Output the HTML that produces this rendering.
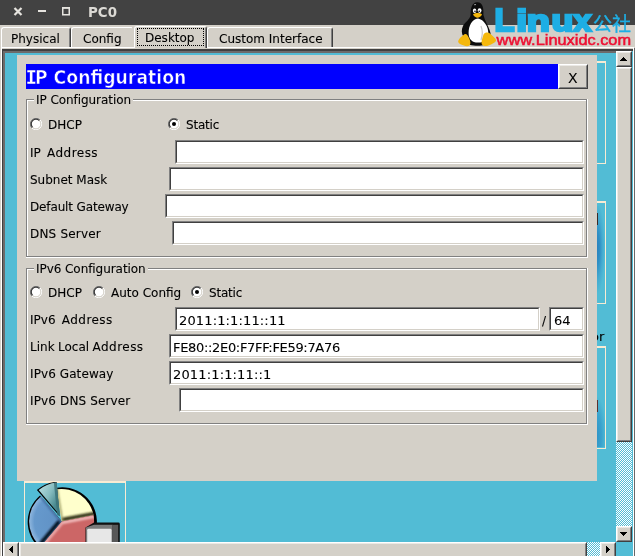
<!DOCTYPE html>
<html>
<head>
<meta charset="utf-8">
<title>PC0</title>
<style>
html,body{margin:0;padding:0;}
body{will-change:transform;}
body{width:635px;height:556px;overflow:hidden;position:relative;background:#d4d0c8;
  font-family:"DejaVu Sans","Liberation Sans",sans-serif;font-size:12px;color:#000;-webkit-text-stroke:0.1px #000;}
.a{position:absolute;box-sizing:border-box;}
.t{position:absolute;white-space:nowrap;line-height:14px;height:14px;}
#titlebar{left:0;top:0;width:635px;height:25px;background:#424242;}
#title{-webkit-text-stroke:0;left:88px;top:5px;font-weight:bold;font-size:13.4px;color:#dcdad5;line-height:16px;height:16px;}
/* tabs */
.tab{position:absolute;box-sizing:border-box;top:27px;height:20px;border-top:1px solid #fff;border-left:1px solid #fff;
  border-right:1px solid #404040;border-top-left-radius:3px;border-top-right-radius:3px;background:#d4d0c8;}
.tab:after{content:"";position:absolute;right:0;top:1px;bottom:0;width:1px;background:#808080;}
.tab span{position:absolute;top:4px;white-space:nowrap;line-height:14px;}
/* sunken input */
.in{position:absolute;box-sizing:border-box;height:24px;background:#fff;border:1px solid;border-color:#808080 #fff #fff #808080;}
.in:before{content:"";position:absolute;left:0;top:0;right:0;bottom:0;border:1px solid;border-color:#404040 #d4d0c8 #d4d0c8 #404040;}
.in span{position:absolute;left:3px;top:5px;font-size:13px;line-height:16px;white-space:nowrap;}
/* group box */
.gb{position:absolute;box-sizing:border-box;border:1px solid #808080;box-shadow:1px 1px 0 #fff, 0 1px 0 #fff, 1px 0 0 #fff, inset 1px 1px 0 #fff;}
.gl{position:absolute;background:#d4d0c8;padding:0 2px 0 2px;letter-spacing:-0.06px;line-height:14px;white-space:nowrap;}
/* radio */
.rb{position:absolute;width:12px;height:12px;}
/* raised button */
.btn{position:absolute;box-sizing:border-box;background:#d4d0c8;border:1px solid;border-color:#fff #404040 #404040 #fff;}
.btn:before{content:"";position:absolute;left:0;top:0;right:0;bottom:0;border:1px solid;border-color:#ebe9e5 #808080 #808080 #ebe9e5;}
.teal{background:#52bcd5;}
.chk{background-color:#52bcd5;background-image:conic-gradient(#fff 25%,transparent 0 50%,#fff 0 75%,transparent 0);background-size:2px 2px;}
.ibox{position:absolute;box-sizing:border-box;border:1px solid #f8ebd3;border-top-width:2px;}
</style>
</head>
<body>
<!-- title bar -->
<div class="a" id="titlebar"></div>
<svg class="a" style="left:0;top:0" width="130" height="24" viewBox="0 0 130 24">
  <g stroke="#e6e4df" fill="none">
    <path d="M14.5 8 L21.5 15 M21.5 8 L14.5 15" stroke-width="2.2"/>
    <path d="M38 11 H46" stroke-width="2"/>
    <path d="M62.75 8 H69.25 V14.75 H62.75 Z" stroke-width="1.5"/>
    <path d="M62 7.75 H70" stroke-width="1.5"/>
  </g>
</svg>
<div class="t" id="title">PC0</div>

<!-- tabs -->
<div class="tab" style="left:1px;width:70px;"><span style="left:9px">Physical</span></div>
<div class="tab" style="left:71px;width:63px;"><span style="left:11px">Config</span></div>
<div class="tab" style="left:207px;width:126px;"><span style="left:11px">Custom Interface</span></div>
<!-- pane top line -->
<div class="a" style="left:1px;top:47px;width:633px;height:1px;background:#fff"></div>
<div class="a" style="left:132px;top:27px;width:2px;height:20px;background:#d4d0c8"></div>
<div class="tab" style="left:134px;width:73px;top:26px;height:22px;"><span style="left:10px;top:4px">Desktop</span>
  <div class="a" style="left:2px;top:1px;width:67px;height:18px;border:1px dotted #000;"></div>
</div>

<!-- pane frame -->
<div class="a" style="left:1px;top:48px;width:1px;height:508px;background:#fff"></div>
<div class="a" style="left:2px;top:49px;width:632px;height:507px;background:#404040"></div>
<div class="a" style="left:3px;top:51px;width:613px;height:505px;background:#6d6b6b"></div>
<div class="a teal" style="left:5px;top:53px;width:611px;height:489px;"></div>
<div class="a teal" style="left:616px;top:51px;width:17px;height:505px;"></div>
<div class="a" style="left:633px;top:48px;width:1px;height:508px;background:#fff"></div>
<div class="a" style="left:634px;top:48px;width:1px;height:508px;background:#686868"></div>

<!-- right icon boxes -->
<div class="ibox" style="left:560px;top:61px;width:46px;height:103px;"></div>
<div class="ibox" style="left:560px;top:201px;width:46px;height:103px;"></div>
<div class="ibox" style="left:560px;top:346px;width:46px;height:103px;"></div>
<div class="a" style="left:597px;top:206px;width:8px;height:96px;background:radial-gradient(ellipse 8px 46px at 0px 42px,#2a82be 0,#2f8fc5 35%,rgba(60,160,205,0.6) 70%,rgba(82,188,213,0) 100%);"></div>
<div class="a" style="left:597px;top:213px;width:1px;height:12px;background:#3a2a28"></div>
<div class="a" style="left:597px;top:396px;width:8px;height:51px;background:radial-gradient(ellipse 9px 40px at 0px 40px,#2f95c8 0,#3aa2cd 50%,rgba(82,188,213,0) 100%);"></div>
<div class="a" style="left:597px;top:400px;width:1px;height:12px;background:#5a3030"></div>
<div class="t" style="left:591px;top:329px;font-size:13px;line-height:16px;height:16px;">or</div>

<!-- bottom icon box -->
<div class="ibox" style="left:24px;top:481px;width:102px;height:102px;"></div>
<svg class="a" style="left:25px;top:482px" width="100" height="60" viewBox="25 482 100 60">
  <defs>
    <radialGradient id="gb" cx="61.6" cy="521.4" r="34" gradientUnits="userSpaceOnUse"><stop offset="0" stop-color="#5f90c4"/><stop offset="0.8" stop-color="#6699cc"/><stop offset="1" stop-color="#9cc0e4"/></radialGradient>
    <linearGradient id="gt" x1="38" y1="489" x2="58" y2="500" gradientUnits="userSpaceOnUse"><stop offset="0" stop-color="#b4dcde"/><stop offset="0.55" stop-color="#86bcc0"/><stop offset="1" stop-color="#4a8a90"/></linearGradient>
    <clipPath id="cy"><path d="M61.60 521.40 L56.24 489.35 A32.5 32.5 0 0 1 93.53 515.37 Z"/></clipPath>
    <clipPath id="cr"><path d="M61.60 521.40 L93.53 515.37 A32.5 32.5 0 0 1 40.71 546.30 Z"/></clipPath>
    <clipPath id="cb"><path d="M61.60 521.40 L40.71 546.30 A32.5 32.5 0 0 1 41.15 496.14 Z"/></clipPath>
    <filter id="bl" x="-20%" y="-20%" width="140%" height="140%"><feGaussianBlur stdDeviation="1.1"/></filter>
  </defs>
  <path d="M62.30 521.90 L57.19 487.68 A34.6 34.6 0 1 1 40.06 495.39 Z" fill="#000"/>
  <path d="M61.60 521.40 L56.24 489.35 A32.5 32.5 0 0 1 93.53 515.37 Z" fill="#ffffcc"/>
  <g clip-path="url(#cy)" filter="url(#bl)"><path d="M61.60 521.40 L95.50 514.99 L94.87 511.65 L60.97 518.06 Z" fill="#2a2a10"/><path d="M61.60 521.40 L55.91 487.37 L57.48 487.11 L63.18 521.14 Z" fill="#8a8a50"/></g>
  <path d="M61.60 521.40 L93.53 515.37 A32.5 32.5 0 0 1 40.71 546.30 Z" fill="#cc6666"/>
  <g clip-path="url(#cr)" filter="url(#bl)"><path d="M61.60 521.40 L95.50 514.99 L95.98 517.55 L62.08 523.95 Z" fill="#f6c8c8"/><path d="M61.60 521.40 L39.42 547.83 L41.42 549.50 L63.59 523.07 Z" fill="#f0b4b4"/></g>
  <path d="M61.60 521.40 L40.71 546.30 A32.5 32.5 0 0 1 41.15 496.14 Z" fill="url(#gb)"/>
  <g clip-path="url(#cb)" filter="url(#bl)"><path d="M61.60 521.40 L39.42 547.83 L36.67 545.51 L58.84 519.09 Z" fill="#060c1c"/><path d="M61.60 521.40 L39.89 494.59 L38.65 495.60 L60.36 522.41 Z" fill="#3c6494"/></g>
  <path d="M59.60 516.20 L36.90 490.09 A34.6 34.6 0 0 1 56.58 481.73 Z" fill="#000"/>
  <path d="M59.90 515.30 L38.69 490.02 A33 33 0 0 1 56.45 482.48 Z" fill="url(#gt)"/>
  <path d="M59.90 515.30 L56.45 482.48 L53.86 482.75 L57.31 515.57 Z" fill="#3c7278" opacity="0.85"/>
  <path d="M85.5 553 V527.5 L94 522.6 H118.4 Q119.8 522.6 119.8 524 V553 Z" fill="#111"/>
  <path d="M86 553 V527.6 L94 524.8 H112.5 V553 Z" fill="#7a7a7a"/>
  <path d="M112.2 524.8 H118.2 V553 H112.2 Z" fill="#585858"/>
  <path d="M87.2 553 V530.2 Q87.2 528.8 88.6 528.8 H110.2 Q111.6 528.8 111.6 530.2 V553 Z" fill="#e7e7e7"/>
</svg>

<!-- dialog -->
<div class="a" style="left:17px;top:55px;width:580px;height:426px;background:#d4d0c8"></div>
<div class="a" style="left:26px;top:64px;width:532px;height:25px;background:#0000ff"></div>
<div class="t" id="dlgtitle" style="left:26px;top:65px;height:24px;line-height:24px;font-family:'DejaVu Sans Condensed','DejaVu Sans',sans-serif;font-stretch:condensed;font-size:19.2px;font-weight:bold;color:#fff;-webkit-text-stroke:0.6px #0000ff;"><span style="font-family:'DejaVu Sans Mono',monospace;font-stretch:normal;font-size:19px;letter-spacing:-2px;margin-left:-0.5px;-webkit-text-stroke:0.3px #0000ff;">I</span>P Configuration</div>
<div class="btn" style="left:558px;top:64px;width:30px;height:25px;"></div>
<div class="t" style="left:568px;top:70px;font-size:14px;line-height:16px;height:16px;">X</div>

<!-- group 1 -->
<div class="gb" style="left:26px;top:99px;width:561px;height:158px;"></div>
<div class="gl" style="left:34px;top:93px;">IP Configuration</div>
<svg class="rb" style="left:30px;top:118px" viewBox="0 0 12 12"><use href="#radio"/></svg>
<div class="t" style="left:48px;top:118px;">DHCP</div>
<svg class="rb" style="left:168px;top:118px" viewBox="0 0 12 12"><use href="#radio"/><use href="#dot"/></svg>
<div class="t" style="left:186px;top:118px;letter-spacing:-0.2px;">Static</div>

<div class="t" style="left:30px;top:146px;"><span style="word-spacing:2.4px">IP </span><span style="letter-spacing:0.47px">Address</span></div>
<div class="in" style="left:175px;top:140px;width:409px;"></div>
<div class="t" style="left:30px;top:173px;">Subnet Mask</div>
<div class="in" style="left:169px;top:167px;width:415px;"></div>
<div class="t" style="left:30px;top:200px;letter-spacing:-0.14px;">Default Gateway</div>
<div class="in" style="left:165px;top:194px;width:419px;"></div>
<div class="t" style="left:30px;top:227px;letter-spacing:0.19px;">DNS Server</div>
<div class="in" style="left:172px;top:221px;width:412px;"></div>

<!-- group 2 -->
<div class="gb" style="left:26px;top:268px;width:561px;height:156px;"></div>
<div class="gl" style="left:34px;top:262px;">IPv6 Configuration</div>
<svg class="rb" style="left:30px;top:286px" viewBox="0 0 12 12"><use href="#radio"/></svg>
<div class="t" style="left:48px;top:286px;">DHCP</div>
<svg class="rb" style="left:93px;top:286px" viewBox="0 0 12 12"><use href="#radio"/></svg>
<div class="t" style="left:111px;top:286px;">Auto Config</div>
<svg class="rb" style="left:191px;top:286px" viewBox="0 0 12 12"><use href="#radio"/><use href="#dot"/></svg>
<div class="t" style="left:209px;top:286px;letter-spacing:-0.2px;">Static</div>

<div class="t" style="left:30px;top:313px;"><span style="word-spacing:2.4px">IPv6 </span><span style="letter-spacing:0.47px">Address</span></div>
<div class="in" style="left:175px;top:307px;width:365px;"><span style="letter-spacing:0.14px">2011:1:1:11::11</span></div>
<div class="t" style="left:542px;top:314px;">/</div>
<div class="in" style="left:549px;top:307px;width:35px;"><span style="left:4px">64</span></div>
<div class="t" style="left:30px;top:340px;"><span style="word-spacing:-0.4px">Link Local </span><span style="letter-spacing:0.47px">Address</span></div>
<div class="in" style="left:169px;top:334px;width:415px;"><span style="letter-spacing:-0.32px">FE80::2E0:F7FF:FE59:7A76</span></div>
<div class="t" style="left:30px;top:367px;letter-spacing:0.09px;">IPv6 Gateway</div>
<div class="in" style="left:169px;top:361px;width:415px;"><span style="letter-spacing:0.15px">2011:1:1:11::1</span></div>
<div class="t" style="left:30px;top:394px;letter-spacing:0.14px;">IPv6 DNS Server</div>
<div class="in" style="left:179px;top:388px;width:405px;"></div>

<!-- vertical scrollbar -->
<div class="a chk" style="left:616px;top:51px;width:16px;height:491px;"></div>
<div class="btn" style="left:616px;top:51px;width:16px;height:16px;"></div>
<div class="btn" style="left:616px;top:67px;width:16px;height:375px;"></div>
<div class="btn" style="left:616px;top:526px;width:16px;height:16px;"></div>
<!-- horizontal scrollbar -->
<div class="a chk" style="left:3px;top:542px;width:613px;height:16px;"></div>
<div class="btn" style="left:3px;top:542px;width:16px;height:16px;"></div>
<div class="btn" style="left:19px;top:542px;width:568px;height:16px;"></div>
<div class="btn" style="left:600px;top:542px;width:16px;height:16px;"></div>
<svg class="a" style="left:0;top:0;pointer-events:none" width="635" height="556" viewBox="0 0 635 556">
  <defs>
    <g id="radio">
      <circle cx="6" cy="6" r="5" fill="#fff"/>
      <path d="M1.9 10.1 A5.8 5.8 0 0 1 10.1 1.9" fill="none" stroke="#808080" stroke-width="1"/>
      <path d="M2.6 9.4 A4.8 4.8 0 0 1 9.4 2.6" fill="none" stroke="#383838" stroke-width="1.25"/>
      <path d="M1.9 10.1 A5.8 5.8 0 0 0 10.1 1.9" fill="none" stroke="#fff" stroke-width="1"/>
      <path d="M2.6 9.4 A4.8 4.8 0 0 0 9.4 2.6" fill="none" stroke="#d4d0c8" stroke-width="1"/>
    </g>
    <circle id="dot" cx="6" cy="6" r="2" fill="#000"/>
  </defs>
  <g fill="#000" shape-rendering="crispEdges"><rect x="623" y="57" width="1" height="1"/><rect x="622" y="58" width="3" height="1"/><rect x="621" y="59" width="5" height="1"/><rect x="620" y="60" width="7" height="1"/><rect x="620" y="532" width="7" height="1"/><rect x="621" y="533" width="5" height="1"/><rect x="622" y="534" width="3" height="1"/><rect x="623" y="535" width="1" height="1"/><rect x="9" y="549" width="1" height="1"/><rect x="10" y="548" width="1" height="3"/><rect x="11" y="547" width="1" height="5"/><rect x="12" y="546" width="1" height="7"/><rect x="606" y="546" width="1" height="7"/><rect x="607" y="547" width="1" height="5"/><rect x="608" y="548" width="1" height="3"/><rect x="609" y="549" width="1" height="1"/></g>
</svg>

<!-- logo -->
<svg class="a" style="left:455px;top:0" width="180" height="48" viewBox="455 0 180 48">
<g id="linuxword">
<text x="494.63" y="31.3" font-family="Liberation Sans, sans-serif" font-weight="bold" font-size="31" fill="#1eaee4" stroke="#1eaee4" stroke-width="2.4" stroke-linejoin="miter" textLength="20.02" lengthAdjust="spacingAndGlyphs">L</text>
<text x="516.28" y="31.3" font-family="Liberation Sans, sans-serif" font-weight="bold" font-size="30" fill="#1eaee4" stroke="#1eaee4" stroke-width="2.4" stroke-linejoin="miter" textLength="10.95" lengthAdjust="spacingAndGlyphs">i</text>
<text x="526.66" y="31.3" font-family="Liberation Sans, sans-serif" font-weight="bold" font-size="30" fill="#1eaee4" stroke="#1eaee4" stroke-width="2.4" stroke-linejoin="miter" textLength="23.13" lengthAdjust="spacingAndGlyphs">n</text>
<text x="551.40" y="31.3" font-family="Liberation Sans, sans-serif" font-weight="bold" font-size="30" fill="#1eaee4" stroke="#1eaee4" stroke-width="2.4" stroke-linejoin="miter" textLength="21.78" lengthAdjust="spacingAndGlyphs">u</text>
<text x="573.41" y="31.3" font-family="Liberation Sans, sans-serif" font-weight="bold" font-size="30" fill="#1eaee4" stroke="#1eaee4" stroke-width="2.4" stroke-linejoin="miter" textLength="17.91" lengthAdjust="spacingAndGlyphs">x</text>
</g>
  <text x="593" y="31" font-family="Noto Sans CJK SC, sans-serif" font-size="19" fill="#1eaee4" stroke="#1eaee4" stroke-width="0.35" textLength="38" lengthAdjust="spacingAndGlyphs">公社</text>
  <text x="496.6" y="44.7" font-family="Liberation Sans, sans-serif" font-size="15.4" fill="#ee1133" stroke="#ee1133" stroke-width="0.55" textLength="134.5" lengthAdjust="spacingAndGlyphs">www.Linuxidc.com</text>
  <!-- tux -->
  <g>
    <path d="M463.5 37 C461.3 33.5 461.3 29.5 463 26 C465 22 469.8 20 470.6 15 C470.5 9 471.5 2.2 477.2 2.2 C483.6 2.2 483.6 10 483.4 15 C485 21 488 25 489.6 30 C491 34 491.5 38 490 41 L484 45 C482 46 474 46 470 45 L466 41 Z" fill="#0c0c0c"/>
    <path d="M474 4.6 L476.2 4 L475 5.6 Z" fill="#ddd"/>
    <path d="M478 18.5 C484 19.5 488.5 27 488.3 33 C488 39 484 42.8 478 42.6 C472 42.6 468.6 39 468.6 33 C468.6 26 472 19 478 18.5 Z" fill="#fff"/>
    <path d="M481 26 C482.5 30 482.5 36 481 40" stroke="#c8c8c8" stroke-width="1.2" fill="none"/>
    <ellipse cx="474.6" cy="10.8" rx="1.7" ry="2.2" fill="#fff"/><ellipse cx="479.6" cy="10.6" rx="1.9" ry="2.3" fill="#fff"/>
    <circle cx="475" cy="11.3" r="0.8" fill="#000"/><circle cx="479.2" cy="11.2" r="0.8" fill="#000"/>
    <path d="M473 14.6 C475 12.8 479.5 12.6 482 14.2 C481.5 16.5 478.5 18 477 17.8 C475.5 17.4 473.5 16 473 14.6 Z" fill="#f5b80c"/>
    <path d="M458.2 41 C459 38 462 36 464.5 34.2 C466.5 33.5 468 35.5 469 38 C470.5 41 471 44 469.5 45.5 C467 47 463.5 45.5 461 44.5 C459 43.8 458 42.5 458.2 41 Z" fill="#f5b80c"/>
    <path d="M496 40 C495.5 38 492.5 36 490 33.5 C488 32 485 32 483.5 34.5 C482.5 38 480.8 42 482 44.5 C484 47 488.5 46 491 44.5 C493.5 43.2 496.3 42 496 40 Z" fill="#f5b80c"/>
  </g>
</svg>
</body>
</html>
